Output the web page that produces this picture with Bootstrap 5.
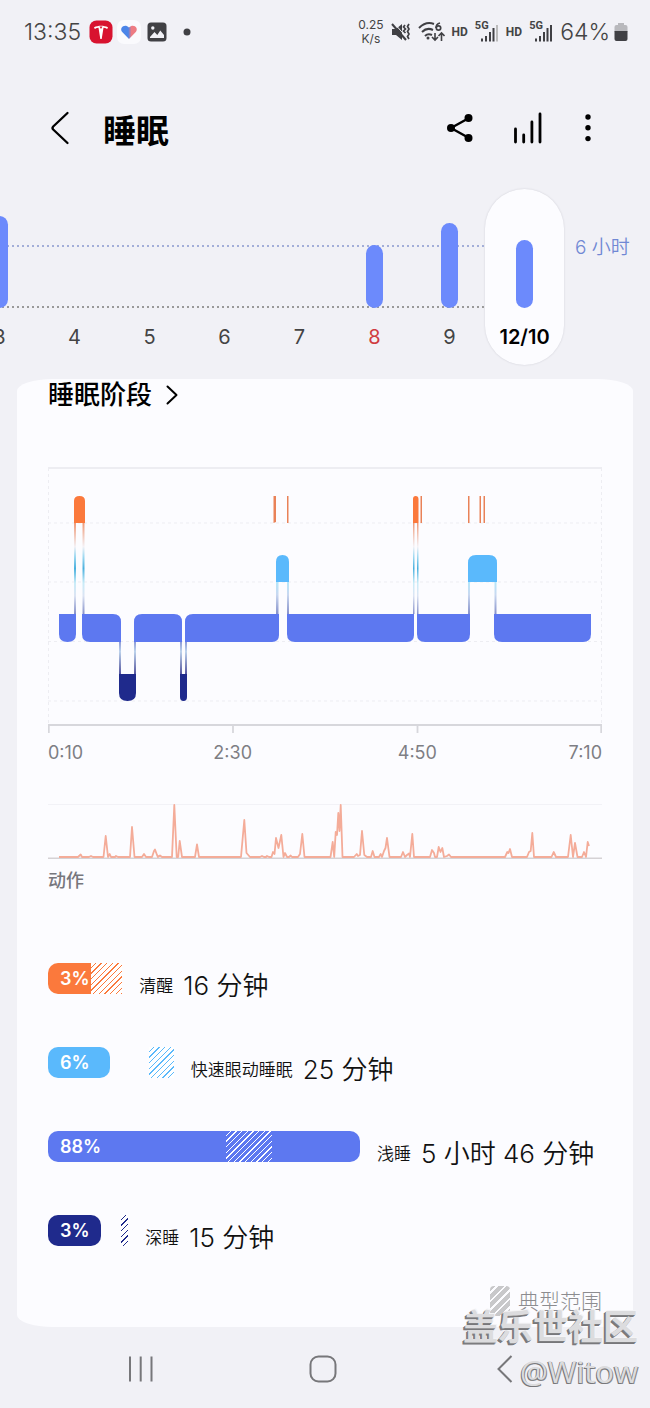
<!DOCTYPE html>
<html lang="zh-CN">
<head>
<meta charset="utf-8">
<meta name="viewport" content="width=device-width, initial-scale=1">
<title>睡眠</title>
<link href="https://cdn.jsdelivr.net/npm/bootstrap@5.3.0/dist/css/bootstrap.min.css" rel="stylesheet">
<style>
  :root { --page: #f1f1f6; --panel: #fcfcff; --awake: #fb793c; --rem: #5ab9fc; --light: #5d78f0; --deep: #1f2a8c; }
  body { background: var(--page); color: #111; font-family: Inter, "Noto Sans CJK SC", sans-serif; overflow-x: hidden; }
  svg { display: block; flex: none; }
  .status { height: 64px; padding: 0 22px 0 24px; color: #444; }
  .status-icons { gap: 7px; }
  .status-big { font-size: 23px; line-height: 28px; font-weight: 300; }
  .speed { font-size: 12px; line-height: 14px; }
  .hd { font: 700 12px/14px Roboto, sans-serif; }
  .signal-tag { position: absolute; left: 0; top: -2px; font: 700 11px/12px Roboto, sans-serif; }
  .icon-btn { color: #000; line-height: 0; border-radius: 8px; }
  .topbar { height: 125px; padding: 2px 58px 0 50px; }
  .page-title { font-size: 33px; line-height: 40px; font-weight: 700; color: #000; padding: 6px 0 0 9px; }

  .week { display: grid; grid-template-columns: repeat(8, 1fr) 88px; margin-left: -38px; height: 176px; }
  .day { color: #444; text-align: center; font-size: 20px; line-height: 24px; padding: 0; border: 0; background: none; display: flex; flex-direction: column; }
  .day-plot { height: 119px; width: 100%; display: flex; align-items: flex-end; justify-content: center;
    background:
      linear-gradient(90deg, #a3aed8 2px, transparent 2px) 0 56px / 5px 2px repeat-x,
      linear-gradient(90deg, #999 2px, transparent 2px) 0 117px / 5px 2px repeat-x; }
  .day-bar { width: 17px; border-radius: 9px; background: #6c8afc; }
  .day-label { margin-top: 17px; width: 100%; }
  .day-holiday { color: #d03c40; }
  .day-active { background: var(--panel); border-radius: 40px; margin: 0 -2px; box-shadow: 0 0 2px #ccccd4; color: #000; font-weight: 600; }
  .day-active .day-plot { background: none; }
  .goal { color: #7088d4; font-size: 19px; line-height: 24px; font-weight: 350; padding: 47px 0 0 13px; white-space: nowrap; }

  .panel { background: var(--panel); margin: 14px 17px 0; padding: 0 31px 9px; border-radius: 36px / 12px; }
  .panel-title { font-size: 26px; line-height: 32px; font-weight: 500; color: #000; }
  .panel-title a { gap: 14px; }
  .stage-chart { margin-top: 56px; }
  .axis { display: grid; grid-template-columns: 1fr 2fr 2fr 1fr; color: #7e7e84; font-size: 18px; line-height: 24px; margin-top: 7px; text-align: center; }
  .move-chart { margin-top: 36px; }
  .caption { color: #77777d; font-size: 18px; line-height: 24px; font-weight: 500; margin-top: 8px; }

  .stages { margin-top: 70px; gap: 53px; }
  .stage { height: 31px; }
  .track { height: 31px; flex: none; position: relative; }
  .fill { height: 31px; border-radius: 10px; color: #fff; font-size: 18px; line-height: 32px; font-weight: 600; padding-left: 12px; background: var(--tone); }
  .typical { position: absolute; top: 0; height: 31px; background: repeating-linear-gradient(135deg, #fff 0 3px, var(--tone) 3px 4px); }
  .awake { --tone: var(--awake); }
  .rem-stage { --tone: var(--rem); }
  .light-stage { --tone: var(--light); }
  .deep-stage { --tone: var(--deep); }
  .light-stage .typical { background: repeating-linear-gradient(135deg, var(--tone) 0 3px, #fff 3px 4px); }
  .stage-text { height: 31px; margin: 7px 0 0 17px; white-space: nowrap; line-height: 30px; gap: 10px; }
  .stage-name { font-size: 17px; font-weight: 350; }
  .stage-time { font-size: 26px; font-weight: 350; }
  .legend-row { margin-top: 40px; height: 32px; color: #8c8c90; font-size: 21px; line-height: 32px; font-weight: 300; }
  .legend-swatch { width: 20px; height: 30px; border-radius: 4px; background: repeating-linear-gradient(135deg, #c8c8ca 0 4px, #fcfcff 4px 6px); }

  .sysnav { height: 82px; padding: 2px 54px 0 50px; color: #77777a; }
  .sysnav .btn { color: inherit; }
  .stamp { position: absolute; right: 12px; bottom: 16px; text-align: right; color: #dcdcde; pointer-events: none; }
  .stamp-site { font-size: 35px; line-height: 44px; font-weight: 700; text-shadow: -1px 1px 0 #808082, -2px 2px 0 #77777a, 1px -1px 0 #f4f4f6; }
  .stamp-user { font-family: "Open Sans", "Noto Sans", sans-serif; font-size: 31px; line-height: 44px; text-shadow: -1px 1px 0 #77777a, 1px 1px 0 #8a8a8c; }
</style>
</head>
<body>
<div class="position-relative">
  <div class="status d-flex align-items-center justify-content-between">
    <div class="d-flex align-items-center">
      <span class="status-big me-2">13:35</span>
      <svg width="24" height="24" viewBox="0 0 24 24"><rect x=".5" y=".5" width="23" height="23" rx="7" fill="#d8132f"/><path d="M5 7.200c4.300-2 9.700-2 14 0l-.8 1.700c-1.400-.7-2.600-1-3.700-1.100L12.700 19h-1.400L9.500 7.800c-1.100.1-2.300.4-3.700 1.100zM10.500 6.500 12 9l1.500-2.500z" fill="#fff"/></svg>
      <svg class="ms-1" width="24" height="24" viewBox="0 0 24 24"><defs><linearGradient id="heart"><stop offset=".45" stop-color="#4b85e8"/><stop offset=".65" stop-color="#ee7c83"/></linearGradient></defs><rect width="24" height="24" rx="7" fill="#fafafd"/><path d="M12 19 5.200 12C1.800 8 7.500 3 12 7.400 16.500 3 22.200 8 18.800 12z" fill="url(#heart)"/></svg>
      <svg class="ms-1" width="22" height="20" viewBox="-2 0 22 20"><rect x=".5" y=".5" width="19" height="19" rx="3.500" fill="#404044"/><path d="m3 15 4.500-5 2.800 3 3-4.500L17 13v3H3z" fill="#f1f1f6"/><circle cx="5.800" cy="6" r="1.700" fill="#f1f1f6"/></svg>
      <svg class="ms-3" width="8" height="8"><circle cx="4" cy="4" r="3.500" fill="#404044"/></svg>
    </div>
    <div class="status-icons d-flex align-items-center">
      <span class="speed text-center">0.25<br>K/s</span>
      <svg width="20" height="20" viewBox="0 0 20 20" fill="none" stroke="#404044"><path d="M1 7h4l6-5v16l-6-5H1z" fill="#404044" stroke="none"/><path d="m3 1 14 16" stroke="#f1f1f6" stroke-width="1"/><path d="m1 2 14 16" stroke-width="2"/><path d="m14 3-1.500 2 2 2-2 2 2 2M18 2l-1.500 2.500L18 7l-1.500 2.500L18 12l-1.500 2.500L18 17" stroke-width="1.700"/></svg>
      <svg width="27" height="22" viewBox="0 0 27 22" fill="none" stroke="#404044" stroke-width="2"><path d="M1 7Q8 0 16 3M4 11q5-5 11-2M7 15q3-3 7-1"/><circle cx="10" cy="17" r="1.500" fill="#404044" stroke="none"/><path d="M22 2q-4 1-4 5" stroke-width="1.700"/><circle cx="20.500" cy="7" r="2.200" stroke-width="1.700"/><path d="M17 12v7m-3-3 3 3 3-3M23.500 20v-8m-3 3 3-3 3 3" stroke-width="1.600"/></svg>
      <span class="hd">HD</span>
      <span class="position-relative"><span class="signal-tag">5G</span><svg width="24" height="20"><path d="M7 16.500v3M11 14v5.500M15 10v9.500M18.500 6v13.500" stroke="#404044" stroke-width="2"/><path d="M22 3v16.500" stroke="#bbb" stroke-width="2"/></svg></span>
      <span class="hd">HD</span>
      <span class="position-relative"><span class="signal-tag">5G</span><svg width="24" height="20"><path d="M7 16.500v3M11 14v5.500M15 10v9.500M18.500 6v13.500M22 3v16.500" stroke="#404044" stroke-width="2"/></svg></span>
      <span class="d-flex align-items-center gap-1"><span class="status-big">64%</span><svg width="14" height="20"><path d="M4 1h6v2h1.500a2 2 0 0 1 2 2v5h-13V5a2 2 0 0 1 2-2H4z" fill="#b8b8bc"/><path d="M.5 9h13v8a2 2 0 0 1-2 2h-9a2 2 0 0 1-2-2z" fill="#404044"/></svg></span>
    </div>
  </div>

  <header class="topbar d-flex align-items-center">
    <button class="btn icon-btn p-0 border-0" aria-label="返回"><svg width="20" height="34" viewBox="0 0 20 34" fill="none" stroke="currentColor" stroke-width="2.300" stroke-linecap="round" stroke-linejoin="round"><path d="M17.500 2 3.200 15.500q-1.400 1.500 0 3L17.500 32"/></svg></button>
    <h1 class="page-title mb-0 ms-4 me-auto">睡眠</h1>
    <button class="btn icon-btn p-0 border-0" aria-label="分享"><svg width="28" height="30" viewBox="0 0 28 30"><path d="M23 5 5 15l18 10" fill="none" stroke="currentColor" stroke-width="2.400"/><g fill="currentColor"><circle cx="22.500" cy="5" r="4"/><circle cx="5" cy="15" r="4"/><circle cx="22.500" cy="25" r="4"/></g></svg></button>
    <button class="btn icon-btn p-0 border-0 ms-4 me-3 ps-3 pe-4" aria-label="趋势"><svg width="30" height="32" viewBox="0 0 30 32"><path d="M1.500 17v13M9.700 23v7M17.900 10v20M26 2v28" stroke="currentColor" stroke-width="2.800" stroke-linecap="round"/></svg></button>
    <button class="btn icon-btn p-0 border-0" aria-label="更多"><svg width="8" height="30" fill="currentColor"><circle cx="4" cy="4" r="2.700"/><circle cx="4" cy="14.800" r="2.700"/><circle cx="4" cy="25.600" r="2.700"/></svg></button>
  </header>

  <main>
    <section class="week" aria-label="每日睡眠">
      <button class="day"><span class="day-plot"><span class="day-bar" style="height:92px"></span></span><span class="day-label">3</span></button>
      <button class="day"><span class="day-plot"></span><span class="day-label">4</span></button>
      <button class="day"><span class="day-plot"></span><span class="day-label">5</span></button>
      <button class="day"><span class="day-plot"></span><span class="day-label">6</span></button>
      <button class="day"><span class="day-plot"></span><span class="day-label">7</span></button>
      <button class="day day-holiday"><span class="day-plot"><span class="day-bar" style="height:63px"></span></span><span class="day-label">8</span></button>
      <button class="day"><span class="day-plot"><span class="day-bar" style="height:85px"></span></span><span class="day-label">9</span></button>
      <button class="day day-active" aria-current="date"><span class="day-plot"><span class="day-bar" style="height:68px"></span></span><span class="day-label">12/10</span></button>
      <div class="goal">6 小时</div>
    </section>

    <section class="panel">
      <h2 class="panel-title mb-0"><a href="#stages" class="text-reset text-decoration-none d-flex align-items-center">睡眠阶段 <svg width="12" height="20" viewBox="0 0 12 20" fill="none" stroke="currentColor" stroke-width="2" stroke-linecap="round" stroke-linejoin="round"><path d="m1.500 1.500 9 8.500-9 8.500"/></svg></a></h2>

      <svg class="stage-chart w-100" height="267" viewBox="0 0 554 267" preserveAspectRatio="none" role="img" aria-label="睡眠阶段图">
        <defs>
          <linearGradient id="legAwake" gradientUnits="userSpaceOnUse" x1="0" y1="56" x2="0" y2="147"><stop offset="0" stop-color="#ef9a78"/><stop offset=".26" stop-color="#f4f1f5"/><stop offset=".36" stop-color="#a6dcf2"/><stop offset=".5" stop-color="#4ab0de"/><stop offset=".66" stop-color="#c9ecf8"/><stop offset=".8" stop-color="#dce4f3"/><stop offset="1" stop-color="#8791ca"/></linearGradient>
          <linearGradient id="legRem" gradientUnits="userSpaceOnUse" x1="0" y1="115" x2="0" y2="147"><stop offset="0" stop-color="#b4e7fa"/><stop offset=".4" stop-color="#c9d8f0"/><stop offset="1" stop-color="#8791ca"/></linearGradient>
          <linearGradient id="legDeep" gradientUnits="userSpaceOnUse" x1="0" y1="175" x2="0" y2="207"><stop offset="0" stop-color="#8e9cd8"/><stop offset=".3" stop-color="#bdd3ec"/><stop offset="1" stop-color="#55559e"/></linearGradient>
        </defs>
        <g stroke="#ededf2" fill="none"><path d="M0 1h554" stroke-width="2"/><path d="M0 56h554M0 115h554M0 174.500h554M0 234h554M.5 1v257M553.500 1v257" stroke-dasharray="3 3"/></g>
        <path d="M0 258h554M.8 258v8M185 258v8M369.500 258v8M553.200 258v8" stroke="#d7d7dc" stroke-width="1.800"/>
        <path d="M26 56h2v91h-2zM34.500 56h2v91h-2zM365 56h1.500v91H365zM369 56h1.500v91H369z" fill="url(#legAwake)"/>
        <path d="M228 115h2.500v32H228zM239 115h2v32h-2zM420 115h2v32h-2zM446.500 115h2v32h-2z" fill="url(#legRem)"/>
        <path d="M71 175h2v32h-2zM86 175h2v32h-2zM132 175h2v32h-2zM137 175h2v32h-2z" fill="url(#legDeep)"/>
        <g fill="#fb793c"><path d="M26 56V34q0-5 5.500-5t5.500 5v22zM365 56V32q0-3 2.700-3t2.800 3v24z"/><path d="M225.500 29h2.500v26l-2.500 1zM239 29h1.500v27H239zM372.500 29h1.500v27h-1.500zM420 29h1.500v27H420zM431.500 29h1.500v27h-1.500zM435.500 29h1.500v27h-1.500z" fill="#e98258"/></g>
        <g fill="#5ab9fc"><path d="M228 115V95q0-7 6.500-7t6.500 7v20zM420 115V96q0-8 8-8h13q8 0 8 8v19z"/></g>
        <g fill="#5d78f0">
          <path d="M11 147h17v20q0 8-8.500 8T11 167z"/>
          <path d="M34 147h31q8 0 8 8v20H42q-8 0-8-8z"/>
          <path d="M86 175v-20q0-8 8-8h32q8 0 8 8v20z"/>
          <path d="M137 175v-20q0-8 8-8h86v21q0 7-7 7z"/>
          <path d="M239 147h127v21q0 7-7 7H247q-8 0-8-8z"/>
          <path d="M369 147h53v20q0 8-8 8h-37q-8 0-8-8z"/>
          <path d="M446 147h97v20q0 8-8 8h-81q-8 0-8-8z"/>
        </g>
        <path d="M71 207h17v19q0 8-8.500 8t-8.500-8zM132 207h7v23q0 4-3.500 4t-3.500-4z" fill="#1f2a8c"/>
      </svg>
      <div class="axis"><span class="text-start">0:10</span><span>2:30</span><span>4:50</span><span class="text-end">7:10</span></div>

      <svg class="move-chart w-100" height="60" viewBox="0 0 554 60" preserveAspectRatio="none" role="img" aria-label="动作图">
        <path d="M0 3.500h554" stroke="#f2f2f7"/><path d="M0 57.200h554" stroke="#d5d2d5" stroke-width="1.600"/>
        <path d="M11 56 30 56 32.700 53.500 34 56 41 56 43 55 45 56 55.500 56 57.700 35 60 56 61.700 53 63 56 67 56 68 55 70 56 82 56 84 26 86.500 56 94 56 96 53 98 56 104 56 106 50 107 48.500 109 54 110 56 112 54.500 114 56 124 56 126.300 4 128.700 56 130.200 56 131.700 40 134 56 147 56 149 43.500 151 56 193 56 196.300 19 198.500 52 202 56 212 56 214 55 216 56 218 56 219 55 221 56 223.500 56 225 51 226.500 53 228 37 230.500 47 233.300 34 235.500 56 237 52 239 56 241 56 242.700 54.500 244 56 250 56 252 53 254.300 33 256.500 56 282.500 56 284.700 41 286.200 56 287.700 31 289 34 290.300 12 291.500 30 292.700 4 294.500 56 306 56 308.700 53 310 55 312 54 314 30 316.300 54 319 56 323 56 324.700 50 326.500 56 331 56 332.700 53 334 56 336 50 337.500 47 339 37 341.500 56 353 56 355 51 357 56 359 54 361 52.500 362 56 364.300 33 366 56 382 56 384 49 386 52 387 56 389 56 390.700 46 392.500 51 394.300 47 396 56 399 55 401 53.500 403 56 457 56 459.300 51 460.500 52 462 48 464 56 479 56 481 51 482.700 50 484.300 32 486 56 503.500 56 505.700 51 508 56 520 56 522.700 34 525 56 527 42 529.500 56 534 56 536 51 538 56 539.700 41 541 45" fill="none" stroke="#f4ac99" stroke-width="1.800" stroke-linejoin="round"/>
      </svg>
      <div class="caption">动作</div>

      <div id="stages" class="stages d-flex flex-column">
        <div class="stage awake d-flex">
          <div class="track" style="width:13.400%"><div class="fill" style="width:71%">3%</div><div class="typical" style="left:58%;right:0"></div></div>
          <div class="stage-text d-flex align-items-center"><span class="stage-name">清醒</span><span class="stage-time">16 分钟</span></div>
        </div>
        <div class="stage rem-stage d-flex">
          <div class="track" style="width:22.700%"><div class="fill" style="width:49.500%">6%</div><div class="typical" style="left:80%;right:0"></div></div>
          <div class="stage-text d-flex align-items-center"><span class="stage-name">快速眼动睡眠</span><span class="stage-time">25 分钟</span></div>
        </div>
        <div class="stage light-stage d-flex">
          <div class="track" style="width:56.300%"><div class="fill">88%</div><div class="typical" style="left:57%;width:14.800%"></div></div>
          <div class="stage-text d-flex align-items-center"><span class="stage-name">浅睡</span><span class="stage-time">5 小时 46 分钟</span></div>
        </div>
        <div class="stage deep-stage d-flex">
          <div class="track" style="width:14.500%"><div class="fill" style="width:66%">3%</div><div class="typical" style="left:91%;right:0"></div></div>
          <div class="stage-text d-flex align-items-center"><span class="stage-name">深睡</span><span class="stage-time">15 分钟</span></div>
        </div>
      </div>

      <div class="legend-row d-flex justify-content-end gap-2"><span class="legend-swatch"></span><span>典型范围</span></div>
    </section>
  </main>

  <nav class="sysnav d-flex align-items-center" aria-label="系统导航">
    <button class="btn col border-0 p-0 d-flex justify-content-center" aria-label="最近"><svg width="26" height="28"><path d="M2 1.500v25M12.700 1.500v25M23.500 1.500v25" stroke="currentColor" stroke-width="2"/></svg></button>
    <button class="btn col border-0 p-0 d-flex justify-content-center" aria-label="主页"><svg width="28" height="28"><rect x="1.500" y="1.500" width="25" height="25" rx="8" fill="none" stroke="currentColor" stroke-width="2"/></svg></button>
    <button class="btn col border-0 p-0 d-flex justify-content-center" aria-label="后退"><svg width="16" height="28"><path d="M14.500 1 1.500 14l13 13" fill="none" stroke="currentColor" stroke-width="2"/></svg></button>
  </nav>

  <div class="stamp"><div class="stamp-site">盖乐世社区</div><div class="stamp-user">@Witow</div></div>
</div>
<script src="https://cdn.jsdelivr.net/npm/bootstrap@5.3.0/dist/js/bootstrap.bundle.min.js"></script>
</body>
</html>
